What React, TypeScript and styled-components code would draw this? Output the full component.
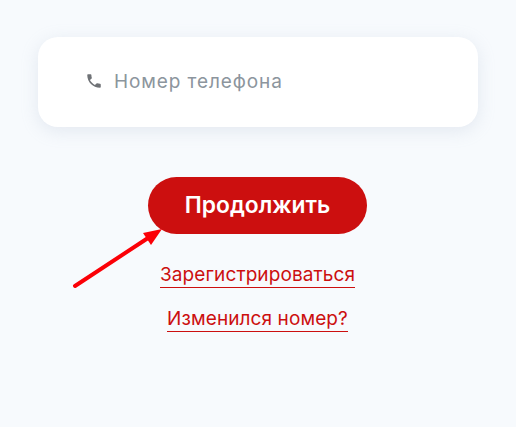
import React from 'react';
import styled, { createGlobalStyle } from 'styled-components';

const GlobalStyle = createGlobalStyle`
  html, body {
    margin: 0;
    padding: 0;
    background: #f7fafd;
  }
`;

const Page = styled.div`
  position: relative;
  width: 516px;
  height: 427px;
  overflow: hidden;
  padding: 37px 38px 0;
  box-sizing: border-box;
  display: flex;
  flex-direction: column;
  align-items: center;
`;

const PhoneCard = styled.div`
  width: 440px;
  height: 90px;
  box-sizing: border-box;
  padding: 0 0 2px 47px;
  display: flex;
  align-items: center;
  gap: 11px;
  background: #fff;
  border-radius: 20px;
  box-shadow: 0 4px 18px rgba(150, 165, 190, 0.2);
`;

const PhoneIcon = styled.svg`
  width: 18px;
  height: 18px;
  fill: #6f7276;
  flex: none;
`;

const Placeholder = styled.span`
  font-family: 'Inter', 'Noto Sans', sans-serif;
  font-size: 19px;
  letter-spacing: 0.9px;
  color: #8c959d;
`;

const SubmitButton = styled.button`
  margin: 50px 1px 0 0;
  width: 219px;
  height: 57px;
  border: 0;
  border-radius: 29px;
  background: #cc0f0f;
  color: #fff;
  font-family: 'Inter', 'Noto Sans', sans-serif;
  font-size: 22.8px;
  font-weight: 600;
  padding: 0 0 2px;
`;

const TextLink = styled.a<{ $top: number }>`
  margin: ${(p) => p.$top}px 1px 0 0;
  color: #cc0f0f;
  font-family: 'Inter', 'Noto Sans', sans-serif;
  font-size: 19px;
  letter-spacing: 0.1px;
  line-height: 22px;
  padding-bottom: 1px;
  border-bottom: 1px solid #cc0f0f;
`;

const ArrowOverlay = styled.svg`
  position: absolute;
  left: 0;
  top: 0;
  width: 516px;
  height: 427px;
  pointer-events: none;
`;

export default function App() {
  return (
    <>
      <GlobalStyle />
      <Page>
        <PhoneCard>
          <PhoneIcon viewBox="0 0 24 24">
            <path d="M6.6 10.8c1.4 2.8 3.8 5.1 6.6 6.6l2.2-2.2c.3-.3.7-.4 1-.2 1.1.4 2.3.6 3.6.6.6 0 1 .4 1 1V20c0 .6-.4 1-1 1C10.6 21 3 13.4 3 4c0-.6.4-1 1-1h3.500c.6 0 1 .4 1 1 0 1.300.2 2.500.6 3.600.1.300 0 .7-.2 1z" />
          </PhoneIcon>
          <Placeholder>Номер телефона</Placeholder>
        </PhoneCard>
        <SubmitButton>Продолжить</SubmitButton>
        <TextLink $top={30}>Зарегистрироваться</TextLink>
        <TextLink $top={20}>Изменился номер?</TextLink>
        <ArrowOverlay viewBox="0 0 516 427">
          <line x1="75" y1="286" x2="148" y2="238" stroke="#fb0007" strokeWidth="4" strokeLinecap="round" />
          <polygon points="162,229 151,245 143,233" fill="#fb0007" />
        </ArrowOverlay>
      </Page>
    </>
  );
}
